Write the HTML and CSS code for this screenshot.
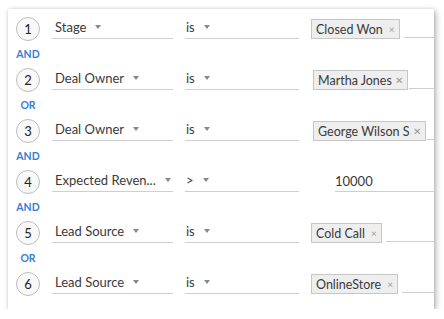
FILE: index.html
```html
<!DOCTYPE html>
<html lang="en">
<head>
    <meta charset="UTF-8">
    <title>Criteria</title>
    <link rel="stylesheet" href="styles.css">
</head>
<body>

<div class="criteria-card">

    <div class="crit-row">
        <div class="crit-num">1</div>
        <div class="crit-field">Stage<span class="caret"></span></div>
        <div class="crit-op">is<span class="caret"></span></div>
        <div class="crit-value">
            <span class="tag">Closed Won<span class="tag-x">&times;</span></span>
            <span class="fill"></span>
        </div>
    </div>
    <div class="crit-join">AND</div>

    <div class="crit-row">
        <div class="crit-num">2</div>
        <div class="crit-field">Deal Owner<span class="caret"></span></div>
        <div class="crit-op">is<span class="caret"></span></div>
        <div class="crit-value user">
            <span class="tag">Martha Jones<span class="tag-x">&#x2715;</span></span>
            <span class="fill"></span>
        </div>
    </div>
    <div class="crit-join">OR</div>

    <div class="crit-row">
        <div class="crit-num">3</div>
        <div class="crit-field">Deal Owner<span class="caret"></span></div>
        <div class="crit-op">is<span class="caret"></span></div>
        <div class="crit-value user">
            <span class="tag">George Wilson S<span class="tag-x">&#x2715;</span></span>
            <span class="fill"></span>
        </div>
    </div>
    <div class="crit-join">AND</div>

    <div class="crit-row">
        <div class="crit-num">4</div>
        <div class="crit-field">Expected Reven...<span class="caret"></span></div>
        <div class="crit-op">&gt;<span class="caret"></span></div>
        <div class="crit-value number">
            <span class="num-input">10000</span>
        </div>
    </div>
    <div class="crit-join">AND</div>

    <div class="crit-row">
        <div class="crit-num">5</div>
        <div class="crit-field">Lead Source<span class="caret"></span></div>
        <div class="crit-op">is<span class="caret"></span></div>
        <div class="crit-value">
            <span class="tag">Cold Call<span class="tag-x">&times;</span></span>
            <span class="fill"></span>
        </div>
    </div>
    <div class="crit-join">OR</div>

    <div class="crit-row">
        <div class="crit-num">6</div>
        <div class="crit-field">Lead Source<span class="caret"></span></div>
        <div class="crit-op">is<span class="caret"></span></div>
        <div class="crit-value">
            <span class="tag">OnlineStore<span class="tag-x">&times;</span></span>
            <span class="fill"></span>
        </div>
    </div>

</div>

</body>
</html>
```

FILE: styles.css
```css
body {
    margin: 0;
    background: #ffffff;
    font-family: Lato, "Liberation Sans", sans-serif;
    color: #3a3a3a;
}

/* carte principale */
.criteria-card {
    width: 426px;
    height: 300px;
    box-sizing: border-box;
    margin: 9px 0 0 8px;
    padding: 8px 0 0 8px;
    background: #ffffff;
    box-shadow: 2px 2px 6px rgba(0, 0, 0, 0.28), 0 0 3px rgba(0, 0, 0, 0.12);
    overflow: hidden;
}

.crit-row {
    display: grid;
    grid-template-columns: 24px 121px 114px 1fr;
    column-gap: 12px;
    height: 24px;
}

.crit-num {
    width: 24px;
    height: 24px;
    box-sizing: border-box;
    border: 1px solid #bdbdbd;
    border-radius: 50%;
    background: #f8f8f8;
    font-size: 13px;
    line-height: 22px;
    text-align: center;
    color: #222;
}

.crit-field, .crit-op {
    height: 22px;
    box-sizing: border-box;
    border-bottom: 1px solid #cfcfcf;
    padding-left: 3px;
    padding-bottom: 2px;
    font-size: 13px;
    display: flex;
    align-items: center;
    white-space: nowrap;
}

.crit-op { padding-left: 1px; }

.caret {
    display: inline-block;
    width: 0;
    height: 0;
    margin-left: 9px;
    margin-top: 1px;
    border-left: 3.5px solid transparent;
    border-right: 3.5px solid transparent;
    border-top: 4px solid #888;
}

.crit-join {
    width: 24px;
    height: 27px;
    line-height: 27px;
    text-align: center;
    font-size: 10.5px;
    font-weight: bold;
    color: #3a7dd0;
}

/* valeurs */
.crit-value {
    display: flex;
    align-items: flex-end;
    height: 22px;
}

.tag {
    display: inline-flex;
    align-items: center;
    height: 20px;
    box-sizing: border-box;
    padding: 0 4px;
    border: 1px solid #c6c6c6;
    background: #eeeeee;
    font-size: 12.5px;
    white-space: nowrap;
}

.tag-x {
    margin-left: 6px;
    font-size: 10px;
    color: #a0a0a0;
}

.user .tag { margin-left: 2px; }
.user .tag-x { margin-left: 3px; font-size: 9.5px; color: #999; }
.user .fill { margin-left: 1px; }

.fill {
    flex: 1;
    margin-left: 4px;
    margin-bottom: 1px;
    border-bottom: 1px solid #cfcfcf;
}

.num-input {
    flex: 1;
    margin-left: 24px;
    padding-bottom: 2px;
    border-bottom: 1px solid #cfcfcf;
    font-size: 13px;
}
```
